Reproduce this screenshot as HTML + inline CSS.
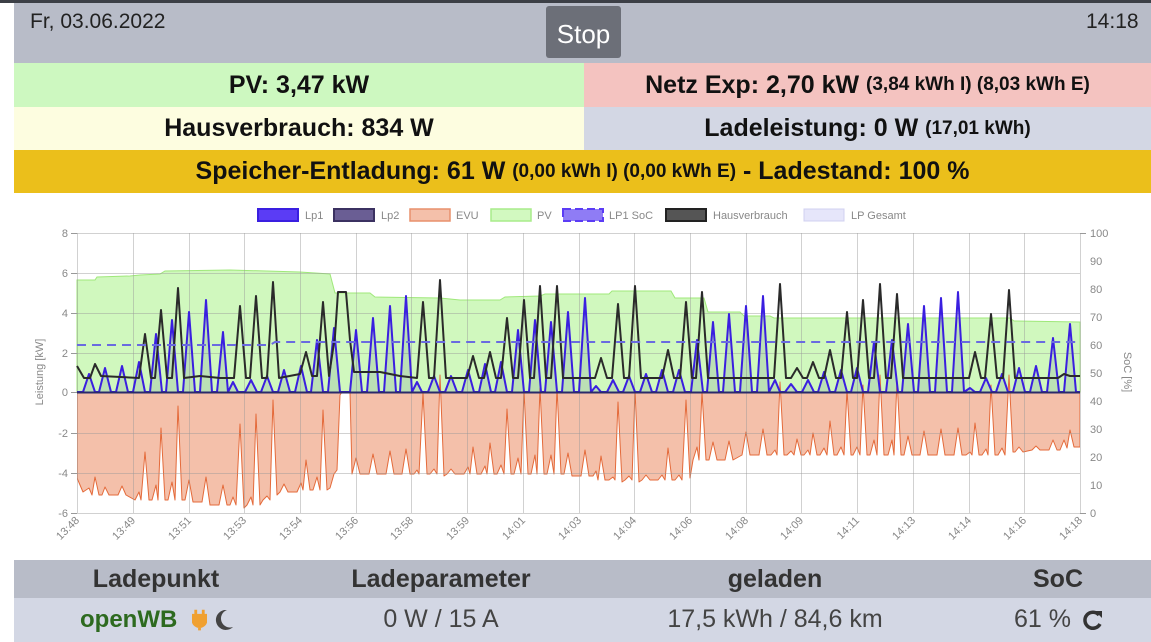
<!DOCTYPE html>
<html><head><meta charset="utf-8"><style>
*{margin:0;padding:0;box-sizing:border-box}
body{width:1151px;height:642px;background:#fff;font-family:"Liberation Sans",sans-serif;position:relative;overflow:hidden}
.a{position:absolute}
.bar{left:14px;width:1137px;display:flex;align-items:center;justify-content:center;font-weight:bold;font-size:25px;color:#111;white-space:nowrap}
.s{font-size:19px}
.bh{font-weight:bold;font-size:25px;color:#333;text-align:center}
.bv{font-size:25px;color:#444;text-align:center}
</style></head><body>
<div class="a" style="left:0;top:0;width:1151px;height:3px;background:#3c3f46"></div>
<div class="a" style="left:14px;top:3px;width:1137px;height:60px;background:#b8bcc8"></div>
<div class="a" style="left:30px;top:10px;font-size:21px;color:#222">Fr, 03.06.2022</div>
<div class="a" style="left:1086px;top:10px;font-size:21px;color:#222">14:18</div>
<div class="a" style="left:546px;top:6px;width:75px;height:52px;background:#6c6f78;border-radius:3px;color:#fff;font-size:26px;display:flex;align-items:center;justify-content:center;padding-top:4px">Stop</div>
<div class="a bar" style="top:63px;height:44px;width:570px;background:#cdf8c0">PV: 3,47 kW</div>
<div class="a bar" style="left:584px;top:63px;height:44px;width:567px;background:#f4c3c0">Netz Exp: 2,70 kW&nbsp;<span class="s">(3,84 kWh I) (8,03 kWh E)</span></div>
<div class="a bar" style="top:107px;height:43px;width:570px;background:#fdfde0">Hausverbrauch: 834 W</div>
<div class="a bar" style="left:584px;top:107px;height:43px;width:567px;background:#d3d7e4">Ladeleistung: 0 W&nbsp;<span class="s">(17,01 kWh)</span></div>
<div class="a bar" style="top:150px;height:43px;background:#ebbf1b">Speicher-Entladung: 61 W&nbsp;<span class="s">(0,00 kWh I) (0,00 kWh E)</span>&nbsp;- Ladestand: 100 %</div>

<svg class="a" style="left:0;top:195px" width="1151" height="365" viewBox="0 195 1151 365" font-family="Liberation Sans, sans-serif">
<g font-size="11" fill="#888">
<rect x="258" y="209" width="40" height="12" fill="#5b3cf5" stroke="#3a1fe0" stroke-width="2"/><text x="305" y="219">Lp1</text>
<rect x="334" y="209" width="40" height="12" fill="#6a5e94" stroke="#3b3161" stroke-width="2"/><text x="381" y="219">Lp2</text>
<rect x="410" y="209" width="40" height="12" fill="#f4c0aa" stroke="#e8906c" stroke-width="1.5"/><text x="456" y="219">EVU</text>
<rect x="491" y="209" width="40" height="12" fill="#d2f9c0" stroke="#a8ec8a" stroke-width="1.5"/><text x="537" y="219">PV</text>
<rect x="563" y="209" width="40" height="12" fill="#8f7cf5" stroke="#5b3cf5" stroke-width="2" stroke-dasharray="8,4"/><text x="609" y="219">LP1 SoC</text>
<rect x="666" y="209" width="40" height="12" fill="#555" stroke="#222" stroke-width="2"/><text x="713" y="219">Hausverbrauch</text>
<rect x="804" y="209" width="40" height="12" fill="#e6e6fa" stroke="#d0d0f0" stroke-width="1"/><text x="851" y="219">LP Gesamt</text>
</g>
<path d="M77,392 L77,280 L95,280 L97,277 L130,276 L140,275 L160,274 L165,271 L230,270 L300,272 L330,274 L335,293 L370,293 L375,297 L440,298 L460,300 L500,300 L505,297 L540,296 L545,294 L609,294 L612,291 L671,291 L675,298 L704,298 L708,312 L740,312 L744,316 L770,316 L774,318 L1010,318 L1014,321 L1080,322 L1080,392 Z" fill="#d0f8be" stroke="#9fe87a" stroke-width="1"/>
<clipPath id="c"><rect x="77" y="233" width="1003" height="280"/></clipPath>
<g clip-path="url(#c)">
<path d="M77,392 L77,478 L83,492 L89,488 L92,495 L95,477 L99,495 L102,495 L105,487 L109,495 L118,495 L122,486 L126,495 L135,500 L139,492 L141,500 L145,452 L149,500 L152,500 L156,485 L158,500 L161,428 L165,500 L168,500 L172,482 L175,500 L178,406 L182,500 L185,500 L189,480 L193,502 L202,502 L206,477 L210,505 L219,505 L223,485 L227,505 L230,505 L233,497 L236,505 L240,424 L244,508 L247,505 L251,497 L253,505 L256,414 L260,505 L263,500 L267,496 L270,500 L273,400 L277,495 L280,492 L284,484 L288,492 L297,492 L301,483 L303,490 L306,460 L310,490 L313,490 L317,477 L320,490 L323,410 L327,490 L330,488 L334,474 L337,470 L340,395 L342,392 L348,392 L350,392 L352,474 L356,458 L360,474 L369,474 L373,454 L377,474 L386,474 L390,451 L394,474 L402,474 L406,449 L410,474 L414,474 L417,470 L419,474 L423,393 L427,474 L430,474 L434,469 L437,474 L440,375 L444,476 L447,474 L451,469 L455,474 L464,474 L468,467 L470,474 L473,447 L477,474 L481,474 L485,466 L487,474 L490,443 L494,474 L497,474 L501,465 L504,474 L507,409 L511,474 L514,474 L518,458 L521,474 L524,391 L528,474 L531,474 L535,455 L537,474 L540,388 L544,474 L547,474 L551,455 L554,474 L557,388 L561,474 L564,474 L568,453 L572,476 L581,476 L585,450 L589,476 L593,476 L596,471 L598,480 L601,456 L605,480 L609,480 L613,477 L615,480 L618,402 L622,482 L625,480 L629,476 L632,480 L635,390 L639,482 L642,480 L646,475 L650,480 L658,480 L662,475 L665,480 L668,448 L672,480 L675,480 L679,475 L682,480 L686,400 L690,478 L693,460 L697,447 L699,460 L702,392 L706,460 L709,460 L713,442 L717,460 L725,460 L729,441 L733,460 L742,455 L746,432 L750,455 L759,455 L763,429 L767,455 L771,455 L775,450 L777,455 L780,382 L784,455 L787,455 L791,451 L794,455 L797,439 L801,455 L804,455 L808,450 L810,455 L813,433 L817,455 L820,455 L824,448 L827,455 L830,421 L834,455 L837,455 L841,447 L844,455 L847,390 L851,455 L853,455 L857,447 L860,455 L863,385 L867,455 L870,455 L874,440 L877,455 L880,375 L884,455 L888,455 L892,440 L894,455 L897,380 L901,455 L904,455 L908,436 L912,455 L920,455 L924,431 L928,455 L937,455 L941,429 L945,455 L954,455 L958,428 L962,455 L966,455 L970,452 L972,455 L975,423 L979,455 L982,455 L986,449 L988,455 L991,385 L995,455 L998,455 L1002,448 L1005,455 L1009,375 L1013,452 L1015,452 L1019,447 L1023,452 L1032,450 L1036,446 L1040,450 L1049,450 L1053,440 L1057,450 L1060,450 L1064,440 L1067,448 L1070,430 L1074,447 L1080,447 L1080,392 Z" fill="#f4c0aa" stroke="#e46a3a" stroke-width="1" stroke-linejoin="round"/>
</g>
<g stroke="#999" stroke-opacity="0.45" stroke-width="1">
<path d="M77,233.5H1080M77,273.5H1080M77,313.5H1080M77,353.5H1080M77,433.5H1080M77,473.5H1080M77,513.5H1080"/>
<path d="M77.5,233V513M133.5,233V513M189.5,233V513M244.5,233V513M300.5,233V513M356.5,233V513M411.5,233V513M467.5,233V513M523.5,233V513M579.5,233V513M634.5,233V513M690.5,233V513M746.5,233V513M801.5,233V513M857.5,233V513M913.5,233V513M969.5,233V513M1024.5,233V513M1080.5,233V513"/>
</g>
<g stroke="#999" stroke-width="1"><path d="M71,233.5H77M71,273.5H77M71,313.5H77M71,353.5H77M71,392.5H77M71,433.5H77M71,473.5H77M71,513.5H77M1080,233.5H1086M1080,513.5H1086"/></g>
<path d="M77,392 L83,392 L89,374 L95,392 L99,392 L105,368 L111,392 L116,392 L122,366 L128,392 L133,392 L139,362 L145,392 L150,392 L156,334 L162,392 L166,392 L172,320 L178,392 L183,392 L189,312 L195,392 L200,392 L206,300 L212,392 L217,392 L223,332 L228,392 L233,382 L238,392 L245,392 L251,380 L257,392 L261,392 L267,376 L273,392 L278,392 L284,370 L290,392 L295,392 L301,366 L307,392 L311,392 L317,340 L323,392 L328,392 L334,328 L340,392 L350,392 L356,330 L362,392 L367,392 L373,318 L379,392 L384,392 L390,306 L396,392 L400,392 L406,296 L412,392 L417,382 L422,392 L428,392 L434,376 L440,392 L445,392 L451,376 L457,392 L462,392 L468,370 L474,392 L479,392 L485,364 L491,392 L495,392 L501,362 L507,392 L512,392 L518,330 L524,392 L529,392 L535,320 L541,392 L545,392 L551,322 L557,392 L562,392 L568,312 L574,392 L579,392 L585,298 L591,392 L596,386 L601,392 L607,392 L613,380 L619,392 L623,392 L629,376 L635,392 L640,392 L646,374 L652,392 L656,392 L662,370 L668,392 L673,392 L679,370 L685,392 L691,392 L697,340 L703,392 L707,392 L713,322 L719,392 L723,392 L729,314 L735,392 L740,392 L746,306 L752,392 L757,392 L763,296 L769,392 L775,380 L780,392 L785,392 L791,384 L797,392 L802,392 L808,380 L814,392 L818,392 L824,372 L830,392 L835,392 L841,370 L847,392 L851,392 L857,368 L863,392 L868,392 L874,342 L880,392 L886,392 L892,340 L898,392 L902,392 L908,324 L914,392 L918,392 L924,306 L930,392 L935,392 L941,298 L947,392 L952,392 L958,292 L964,392 L970,388 L975,392 L980,392 L986,378 L992,392 L996,392 L1002,374 L1008,392 L1013,392 L1019,368 L1025,392 L1030,392 L1036,366 L1042,392 L1047,392 L1053,338 L1059,392 L1064,392 L1070,324 L1076,392 L1080,392" fill="rgba(40,60,120,0.12)" stroke="#3a1fe0" stroke-width="2" stroke-linejoin="round"/>
<path d="M77,366 L84,378 L90,378 L95,364 L101,376 L139,378 L145,334 L151,378 L155,378 L161,310 L167,378 L172,378 L178,288 L184,378 L200,376 L220,378 L234,378 L240,306 L246,378 L250,378 L256,296 L262,378 L267,378 L273,282 L279,378 L300,374 L306,352 L312,376 L317,376 L323,302 L329,376 L335,336 L338,292 L346,292 L350,340 L354,372 L380,372 L400,376 L417,378 L423,302 L429,378 L434,378 L440,280 L446,378 L467,378 L473,356 L479,378 L484,378 L490,352 L496,378 L501,378 L507,318 L513,378 L518,378 L524,300 L530,378 L534,378 L540,286 L546,378 L551,378 L557,286 L563,378 L595,378 L601,358 L607,378 L612,378 L618,304 L624,378 L629,378 L635,286 L641,378 L662,378 L668,350 L674,378 L680,378 L686,302 L692,378 L696,378 L702,292 L708,378 L774,378 L780,284 L786,378 L791,378 L797,368 L803,378 L807,378 L813,362 L819,378 L824,378 L830,350 L836,378 L841,378 L847,312 L853,378 L857,378 L863,300 L869,378 L874,378 L880,284 L886,378 L891,378 L897,294 L903,378 L969,378 L975,352 L981,378 L985,378 L991,314 L997,378 L1003,378 L1009,290 L1015,378 L1058,378 L1064,374 L1070,376 L1080,376" fill="none" stroke="#2a2a2a" stroke-width="2" stroke-linejoin="round"/>
<path d="M77,345 L270,345 L275,342 L1080,342" fill="none" stroke="#6a6ae0" stroke-width="2" stroke-dasharray="9,6"/>
<path d="M77,392.5H1080" stroke="#2a2a6a" stroke-width="2"/>
<g font-size="11" fill="#888" text-anchor="end">
<text x="68" y="237">8</text><text x="68" y="277">6</text><text x="68" y="317">4</text><text x="68" y="357">2</text><text x="68" y="396">0</text><text x="68" y="437">-2</text><text x="68" y="477">-4</text><text x="68" y="517">-6</text>
</g>
<g font-size="11" fill="#888">
<text x="1090" y="237">100</text><text x="1090" y="265">90</text><text x="1090" y="293">80</text><text x="1090" y="321">70</text><text x="1090" y="349">60</text><text x="1090" y="377">50</text><text x="1090" y="405">40</text><text x="1090" y="433">30</text><text x="1090" y="461">20</text><text x="1090" y="489">10</text><text x="1090" y="517">0</text>
</g>
<text font-size="11" fill="#888" transform="translate(43,372) rotate(-90)" text-anchor="middle">Leistung [kW]</text>
<text font-size="11" fill="#888" transform="translate(1124,372) rotate(90)" text-anchor="middle">SoC [%]</text>
<g font-size="11" fill="#888" text-anchor="end">
<text transform="translate(80,521) rotate(-45)">13:48</text>
<text transform="translate(136,521) rotate(-45)">13:49</text>
<text transform="translate(192,521) rotate(-45)">13:51</text>
<text transform="translate(247,521) rotate(-45)">13:53</text>
<text transform="translate(303,521) rotate(-45)">13:54</text>
<text transform="translate(359,521) rotate(-45)">13:56</text>
<text transform="translate(414,521) rotate(-45)">13:58</text>
<text transform="translate(470,521) rotate(-45)">13:59</text>
<text transform="translate(526,521) rotate(-45)">14:01</text>
<text transform="translate(582,521) rotate(-45)">14:03</text>
<text transform="translate(637,521) rotate(-45)">14:04</text>
<text transform="translate(693,521) rotate(-45)">14:06</text>
<text transform="translate(749,521) rotate(-45)">14:08</text>
<text transform="translate(804,521) rotate(-45)">14:09</text>
<text transform="translate(860,521) rotate(-45)">14:11</text>
<text transform="translate(916,521) rotate(-45)">14:13</text>
<text transform="translate(972,521) rotate(-45)">14:14</text>
<text transform="translate(1027,521) rotate(-45)">14:16</text>
<text transform="translate(1083,521) rotate(-45)">14:18</text>
</g>
</svg>

<div class="a" style="left:14px;top:560px;width:1137px;height:38px;background:#b8bcc8"></div>
<div class="a" style="left:14px;top:598px;width:1137px;height:44px;background:#d3d7e4"></div>
<div class="a bh" style="left:41px;top:565px;width:230px">Ladepunkt</div>
<div class="a bh" style="left:301px;top:565px;width:280px">Ladeparameter</div>
<div class="a bh" style="left:660px;top:565px;width:230px">geladen</div>
<div class="a bh" style="left:943px;top:565px;width:230px">SoC</div>
<div class="a" style="left:80px;top:606px;font-size:24px;font-weight:bold;color:#2d6a1f">openWB</div>
<svg class="a" style="left:192px;top:608px" width="15" height="24" viewBox="0 0 16 24"><path d="M4,1V7M12,1V7M1,7H15V12A7,7 0 0 1 1,12Z M8,18V23" stroke="#f0a030" stroke-width="3" fill="#f0a030"/></svg>
<svg class="a" style="left:214px;top:609px" width="20" height="22" viewBox="0 0 20 22"><path d="M13,1A10,10 0 1 0 19,18A8,8 0 0 1 13,1Z" fill="#444"/></svg>
<div class="a bv" style="left:321px;top:605px;width:240px">0 W / 15 A</div>
<div class="a bv" style="left:634px;top:605px;width:282px">17,5 kWh / 84,6 km</div>
<div class="a bv" style="left:1014px;top:605px">61 %</div>
<svg class="a" style="left:1082px;top:609px" width="22" height="22" viewBox="0 0 22 22"><path d="M17,6A8,8 0 1 0 18,15" fill="none" stroke="#333" stroke-width="3.5"/><path d="M13,2L20,2L20,9Z" fill="#333"/></svg>
</body></html>
